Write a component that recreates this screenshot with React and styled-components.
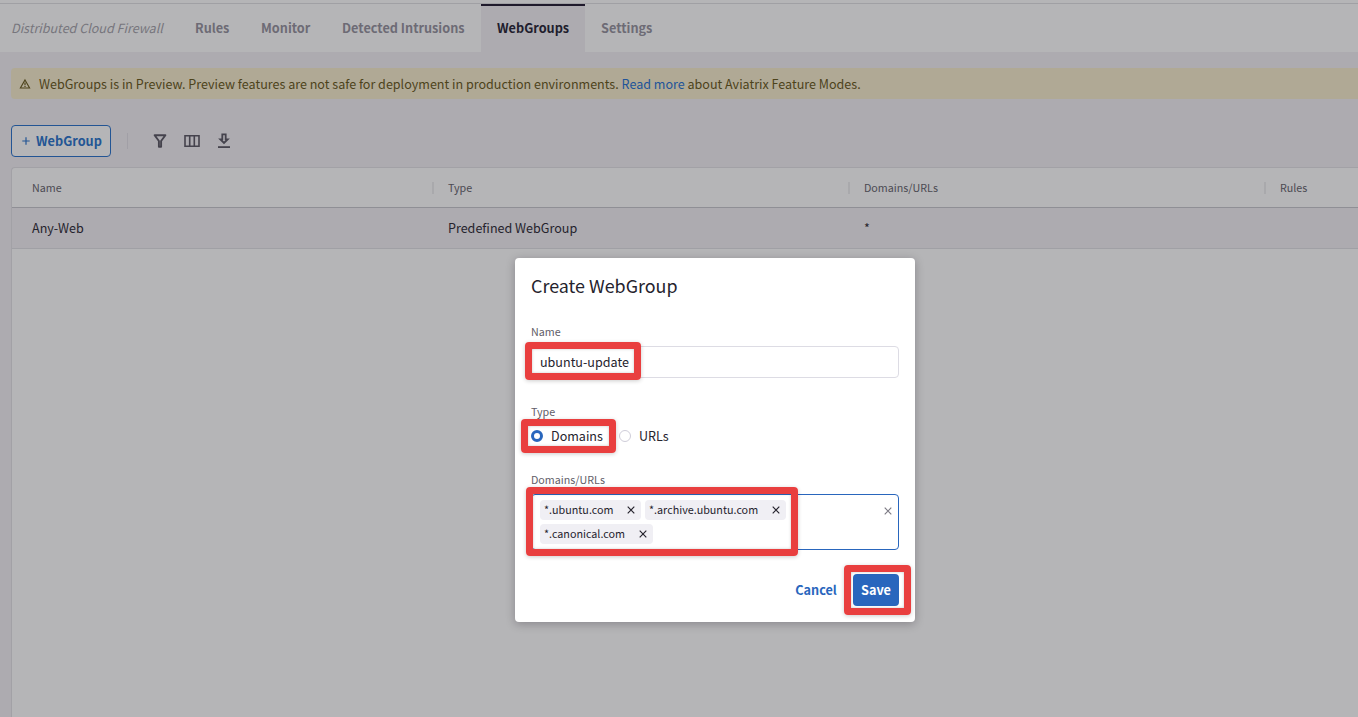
import React from 'react';
import styled, { createGlobalStyle, css } from 'styled-components';

const blue = '#2966bd';
const dimBlue = '#235594';
const ink = '#25232d';
const red = '#e93f3f';

const GlobalStyle = createGlobalStyle`
  * { box-sizing: border-box; }
  html, body { margin: 0; height: 100%; overflow: hidden; }
  body {
    background: #adabb0;
    font-family: "Noto Sans CJK SC", "Noto Sans", sans-serif;
    font-size: 12.55px;
    line-height: 20px;
    color: ${ink};
  }
  button, input { font: inherit; }
`;

const Page = styled.div`
  position: relative;
  display: flex;
  flex-direction: column;
  height: 717px;
  overflow: hidden;
`;

const TopStrip = styled.div`
  flex: none;
  height: 4px;
  background: #b5b5b7;
  border-bottom: 1px solid #a0a0a4;
`;

const Nav = styled.nav`
  flex: none;
  display: flex;
  height: 48px;
  background: #b5b5b7;
  white-space: nowrap;
`;

const NavTitle = styled.div`
  width: 179px;
  padding: 14px 0 0 11px;
  font-style: italic;
  font-size: 12.55px;
  color: #77767d;
`;

const Tab = styled.a`
  width: ${(p) => p.$width}px;
  padding: 10px 0 0 16px;
  border-top: 4px solid transparent;
  font-weight: 700;
  font-size: 12.7px;
  color: #6d6b75;
  ${(p) =>
    p.$active &&
    css`
      padding-top: 12px;
      border-top: 2px solid #1f1a2c;
      background: #adabb0;
      color: #211d2d;
    `}
`;

const Banner = styled.div`
  flex: none;
  display: flex;
  align-items: center;
  height: 31px;
  margin: 16px 0 0 11px;
  padding: 1px 0 0 8px;
  border-radius: 4px 0 0 4px;
  background: #b0a995;
  color: #4d431b;
  white-space: pre;
  svg { margin-right: 8px; }
  a { color: #215499; }
`;

const Toolbar = styled.div`
  flex: none;
  display: flex;
  align-items: center;
  height: 32px;
  margin: 26px 0 0 11px;
`;

const AddButton = styled.button`
  display: flex;
  align-items: center;
  width: 100px;
  height: 32px;
  padding: 0 0 0 10px;
  border: 1px solid ${dimBlue};
  border-radius: 4px;
  background: #b5b5b7;
  color: ${dimBlue};
  font-weight: 700;
  font-size: 12.7px;
  svg { margin-right: 6px; }
`;

const Divider = styled.span`
  width: 1px;
  height: 16px;
  margin: 0 24px 0 16px;
  background: #a19fa6;
`;

const Tools = styled.div`
  display: flex;
  gap: 16px;
  color: #45434d;
`;

const Table = styled.div`
  flex: 1;
  display: flex;
  flex-direction: column;
  margin: 10px 0 0 11px;
  border: 1px solid #a2a1a6;
  border-width: 1px 0 0 1px;
  border-radius: 4px 0 0 0;
  background: #b5b5b7;
`;

const Row = styled.div`
  display: flex;
  align-items: center;
  width: 1668px;
  height: ${(p) => (p.$head ? 40 : 41)}px;
  padding-left: 4px;
  border-bottom: 1px solid ${(p) => (p.$head ? '#8f8f95' : '#a0a0a5')};
  background: ${(p) => (p.$head ? 'transparent' : '#adabb0')};
`;

const HeadCell = styled.div`
  flex: none;
  width: 416px;
  height: 12px;
  padding-left: 14px;
  border-left: 2px solid ${(p) => (p.$first ? 'transparent' : '#a9a9ac')};
  font-size: 10.72px;
  line-height: 12px;
  color: #4b4a52;
`;

const Cell = styled.div`
  flex: none;
  width: 416px;
  padding-left: 16px;
`;

const Modal = styled.section`
  position: absolute;
  left: 515px;
  top: 258px;
  display: flex;
  flex-direction: column;
  width: 400px;
  height: 364px;
  padding: 15px 16px 16px;
  border-radius: 4px;
  background: #fff;
  box-shadow: 0 2px 10px rgba(20, 16, 30, 0.28);
`;

const Title = styled.h2`
  margin: 0;
  font-size: 17.9px;
  line-height: 25px;
  font-weight: 400;
`;

const Field = styled.div`
  position: relative;
  display: flex;
  flex-direction: column;
  margin-top: ${(p) => p.$top}px;
`;

const Label = styled.label`
  margin-bottom: ${(p) => p.$gap || 0}px;
  font-size: 10.72px;
  line-height: 16px;
  color: #5f5d68;
`;

const TextInput = styled.input`
  height: 32px;
  padding: 0 8px 2px;
  border: 1px solid #dddce4;
  border-radius: 4px;
  outline: 0;
  color: ${ink};
`;

const Radios = styled.div`
  display: flex;
  height: 20px;
`;

const Option = styled.div`
  display: flex;
  align-items: center;
  gap: 8px;
  width: ${(p) => p.$width}px;
`;

const Radio = styled.span`
  width: 12px;
  height: 12px;
  border-radius: 50%;
  border: ${(p) => (p.$on ? `3px solid ${blue}` : '1px solid #cfcdd9')};
`;

const TagInput = styled.div`
  display: flex;
  justify-content: space-between;
  height: 56px;
  padding: 5px 6px 5px 8px;
  border: 1px solid ${blue};
  border-radius: 4px;
  color: #7c7a84;
`;

const Tags = styled.div`
  display: flex;
  flex-wrap: wrap;
  gap: 4px;
  width: 260px;
`;

const Tag = styled.span`
  display: flex;
  align-items: center;
  justify-content: space-between;
  width: ${(p) => p.$width}px;
  height: 20px;
  padding: 0 6px 0 4px;
  border-radius: 4px;
  background: #f0eff4;
  color: ${ink};
  font-size: 10.77px;
`;

const ClearSlot = styled.span`
  display: flex;
  height: 8px;
  margin-top: 7px;
`;

const Actions = styled.div`
  display: flex;
  justify-content: flex-end;
  margin-top: 24px;
`;

const Button = styled.button`
  width: ${(p) => p.$width}px;
  height: 32px;
  padding: 0;
  border: 0;
  border-radius: 4px;
  font-weight: 700;
  font-size: 12.7px;
  background: ${(p) => (p.$primary ? blue : 'transparent')};
  color: ${(p) => (p.$primary ? '#fff' : blue)};
`;

const SaveSlot = styled.div`
  position: relative;
  margin-left: 8px;
`;

const Marker = styled.span`
  position: absolute;
  left: ${(p) => p.$x}px;
  top: ${(p) => p.$y}px;
  width: ${(p) => p.$w}px;
  height: ${(p) => p.$h}px;
  border: 7px solid ${red};
  border-radius: 4px;
  box-shadow: 0 1px 4px rgba(0, 0, 0, 0.2), inset 0 0 3px rgba(0, 0, 0, 0.22);
  pointer-events: none;
`;

const WarningIcon = () => (
  <svg width="12" height="12" viewBox="0 0 12 12" fill="none" stroke="currentColor">
    <path d="M6 1.9 10.6 10H1.4z" strokeWidth="1.1" />
    <path d="M6 4.5v2.7M6 7.9v1.1" strokeWidth="1.2" />
  </svg>
);

const PlusIcon = () => (
  <svg width="8" height="8" viewBox="0 0 8 8" fill="none" stroke="currentColor" strokeWidth="1.2">
    <path d="M4 .3v7.4M.3 4h7.4" />
  </svg>
);

const FilterIcon = () => (
  <svg width="16" height="16" viewBox="0 0 16 16" fill="none" stroke="currentColor" strokeWidth="1.9">
    <path d="M2.6 2.2h10.8L9.1 8v5.8H6.9V8z" strokeLinejoin="round" />
  </svg>
);

const ColumnsIcon = () => (
  <svg width="16" height="16" viewBox="0 0 16 16" fill="none" stroke="currentColor" strokeWidth="1.6">
    <path d="M1 2.8h14v10.4H1zM5.7 2.8v10.4M10.3 2.8v10.4" />
  </svg>
);

const DownloadIcon = () => (
  <svg width="16" height="16" viewBox="0 0 16 16" fill="none" stroke="currentColor" strokeWidth="1.8">
    <path d="M6.3 1.4h3.4v4.9h2L8 10 4.3 6.3h2z" />
    <path d="M2 14.1h12" strokeWidth="1.8" />
  </svg>
);

const CloseIcon = () => (
  <svg width="8" height="8" viewBox="0 0 8 8" fill="none" stroke="currentColor" strokeWidth="1.15">
    <path d="m.7.7 6.6 6.6M7.3.7.7 7.3" />
  </svg>
);

const tabs = [
  { name: 'Rules', width: 66 },
  { name: 'Monitor', width: 81 },
  { name: 'Detected Intrusions', width: 155 },
  { name: 'WebGroups', width: 104, active: true },
  { name: 'Settings', width: 84 },
];
const columns = ['Name', 'Type', 'Domains/URLs', 'Rules'];
const values = ['Any-Web', 'Predefined WebGroup', '*', ''];
const domains = [
  { name: '*.ubuntu.com', width: 101 },
  { name: '*.archive.ubuntu.com', width: 141 },
  { name: '*.canonical.com', width: 113 },
];

export default function App() {
  return (
    <Page>
      <GlobalStyle />
      <TopStrip />
      <Nav>
        <NavTitle>Distributed Cloud Firewall</NavTitle>
        {tabs.map((t) => (
          <Tab key={t.name} $width={t.width} $active={t.active}>{t.name}</Tab>
        ))}
      </Nav>
      <Banner>
        <WarningIcon />
        <span>
          WebGroups is in Preview. Preview features are not safe for deployment in production environments.{' '}
          <a>Read more</a> about Aviatrix Feature Modes.
        </span>
      </Banner>
      <Toolbar>
        <AddButton><PlusIcon />WebGroup</AddButton>
        <Divider />
        <Tools><FilterIcon /><ColumnsIcon /><DownloadIcon /></Tools>
      </Toolbar>
      <Table>
        <Row $head>
          {columns.map((c, i) => <HeadCell key={c} $first={i === 0}>{c}</HeadCell>)}
        </Row>
        <Row>
          {values.map((v, i) => <Cell key={columns[i]}>{v}</Cell>)}
        </Row>
      </Table>

      <Modal>
        <Title>Create WebGroup</Title>
        <Field $top={26}>
          <Label $gap={6}>Name</Label>
          <TextInput defaultValue="ubuntu-update" />
          <Marker $x={-6} $y={18} $w={116} $h={38} />
        </Field>
        <Field $top={26}>
          <Label $gap={6}>Type</Label>
          <Radios>
            <Option $width={88}><Radio $on />Domains</Option>
            <Option $width={60}><Radio />URLs</Option>
          </Radios>
          <Marker $x={-10} $y={15} $w={95} $h={34} />
        </Field>
        <Field $top={26}>
          <Label $gap={6}>Domains/URLs</Label>
          <TagInput>
            <Tags>
              {domains.map((d) => (
                <Tag key={d.name} $width={d.width}>{d.name}<CloseIcon /></Tag>
              ))}
            </Tags>
            <ClearSlot><CloseIcon /></ClearSlot>
          </TagInput>
          <Marker $x={-5} $y={15} $w={272} $h={69} />
        </Field>
        <Actions>
          <Button $width={58}>Cancel</Button>
          <SaveSlot>
            <Button $primary $width={46}>Save</Button>
            <Marker $x={-9} $y={-9} $w={67} $h={50} />
          </SaveSlot>
        </Actions>
      </Modal>
    </Page>
  );
}
